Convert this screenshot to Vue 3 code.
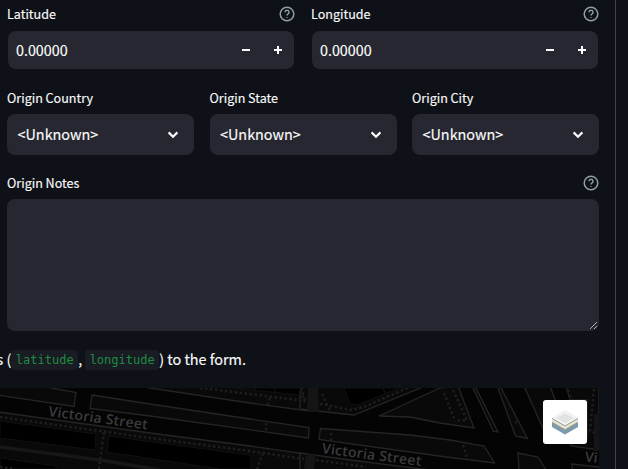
<script setup>
const coordinates = ['Latitude', 'Longitude']
const origins = ['Origin Country', 'Origin State', 'Origin City']
</script>

<template>
  <main class="page">
    <section class="panel">
      <div class="row coords">
        <div v-for="name in coordinates" :key="name" class="field">
          <div class="label">
            <span>{{ name }}</span>
            <svg class="help" viewBox="0 0 16 16"><circle cx="8" cy="8" r="6.8" /><path d="M6 6.300a2 2 0 1 1 3.100 1.600C8.300 8.400 8 8.700 8 9.500M8 11.200v.9" /></svg>
          </div>
          <div class="number">
            <span class="value">0.00000</span>
            <span class="step"><svg viewBox="0 0 8 8"><path d="M0 3h8v2H0z" /></svg></span>
            <span class="step"><svg viewBox="0 0 8 8"><path d="M3 0h2v3h3v2H5v3H3V5H0V3h3z" /></svg></span>
          </div>
        </div>
      </div>

      <div class="row origins">
        <div v-for="name in origins" :key="name" class="field">
          <div class="label"><span>{{ name }}</span></div>
          <div class="select">
            <span>&lt;Unknown&gt;</span>
            <svg viewBox="0 0 12 8"><path d="M1.600 1.400 6 5.700l4.400-4.300" /></svg>
          </div>
        </div>
      </div>

      <div class="field notes">
        <div class="label">
          <span>Origin Notes</span>
          <svg class="help" viewBox="0 0 16 16"><circle cx="8" cy="8" r="6.800" /><path d="M6 6.300a2 2 0 1 1 3.100 1.600C8.300 8.400 8 8.700 8 9.500M8 11.200v.9" /></svg>
        </div>
        <div class="area">
          <svg viewBox="0 0 9 9"><path d="M1 8 8 1M5 8l3-3" /></svg>
        </div>
      </div>

      <p class="hint"><span>s (</span><code>latitude</code><span class="comma">,</span><code>longitude</code><span class="tail">) to the form.</span></p>

      <div class="map">
        <svg class="tiles" viewBox="0 388 599 81">
          <rect y="388" width="599" height="81" fill="#040404" />
          <g class="block">
            <path d="M-2 378 76 392.500 74 406.500-2 395z" />
            <path d="M92 395 150 404 250 419 309 427.500 308.500 438 150 416 90 408.500z" />
            <path d="M90 380 150 388 250 403 309 411 309 380z" />
            <path d="M-2 412 150 433 250 446 306 454 306 475H-2z" />
            <path d="M300 409 354 415 440 380H300z" />
            <path d="M379 416 440 388 458 386 474 428 440 423 410 417z" />
            <path d="M320.500 428.500 410 435 450 440 484 446 494.500 463 450 457.500 319 439.500z" />
            <path d="M300 453 350 460 430 470V480H300z" />
            <path d="M475 386 498 432 493.500 431.500 473 388z" />
            <path d="M500 386 527.500 438.500 515.500 436 498 388z" />
            <path d="M524 386 545 433 552 440 570 440 550 386z" />
            <path d="M566 386H599V450L571 446V438H587V400H570z" />
            <path d="M518 453 538 457 546 470H519z" />
            <path d="M572 464 599 467V475H572z" />
          </g>
          <g class="building">
            <path d="M0 421 96 434 95 450 0 438z" />
            <path d="M109 436 249 455Q252 456 251 462V469H220L107 452z" />
            <path d="M0 458 56 466V469H0z" />
            <path d="M234 388 299 395 302 388z" />
            <path d="M344 388 350 404 358 405 398 388z" />
            <path d="M336 468h28v3h-28z" />
          </g>
          <g>
            <path d="M308 388h10l1 24h-12zM306 454l10 1-2 14h-10zM594 414h5v37h-5z" fill="#151515" />
            <path d="M0 447 100 460 160 470" stroke="#171717" stroke-width="3.500" fill="none" />
          </g>
          <g class="dots">
            <path d="M0 417 100 431 150 438 250 451 304 459" />
            <path d="M200 388 250 394 305 401M301 388 305 400" />
            <path d="M104 432 99 469M270 398 267 407M266 423V432M263 453 257 469" />
            <path d="M320 404 352 410 366 406 412 386M322 394l8 17M300 391l5 11" />
            <path d="M444 393 455 421M453 390 467 420 455 421" />
            <path d="M316 460 366 467M331 433v10M463 445l4 13M516 421v4M568 390l4 10" />
            <path d="M594 389 590 431 595 433M0 467 15 469" />
          </g>
          <path class="edge" d="M243 388v2M255 388v3M275 388v5M383 388l2 5" />
          <g class="street">
            <text x="48" y="416" transform="rotate(7.800 48 416)" textLength="100">Victoria Street</text>
            <text x="321.500" y="453" transform="rotate(7.500 321.500 453)" textLength="100">Victoria Street</text>
            <text x="584.500" y="461.500" transform="rotate(6 584.500 461.500)">Vi</text>
          </g>
        </svg>
        <div class="layers">
          <svg viewBox="0 0 28 28">
            <path d="M1 15 14 8 27 15v4L14 26.500 1 19z" fill="#7b9bad" />
            <path d="M1 12 14 5 27 12v2L14 21.500 1 14z" fill="#ece7d3" />
            <path d="M1 14 14 21.500 27 14" fill="none" stroke="#a79f88" stroke-width=".8" />
            <path d="M1 9.500 14 2 27 9.500v1L14 18 1 10.500z" fill="#f1f2f0" />
            <path d="M1 10.500 14 18 27 10.500" fill="none" stroke="#8b9a9d" />
            <path d="M5.500 10 14 5.500 22.500 10 14 15z" fill="#e0e3df" />
          </svg>
        </div>
      </div>
    </section>
  </main>
</template>

<style>
body { background: #0e1117; overflow: hidden; }
</style>

<style scoped>
* { box-sizing: border-box; }
.page { height: 469px; overflow: hidden; color: #fafafa; font-family: "Noto Sans CJK SC", sans-serif; }
.panel { width: 616px; height: 469px; border-right: 1px solid #41434a; overflow: hidden; }
.row { display: grid; margin-left: 7px; width: 592px; }
.coords { grid-template-columns: 1fr 1fr; gap: 16px; padding-top: 2px; }
.origins { grid-template-columns: 187px 187px 187px; justify-content: space-between; margin-top: 16px; }
.label { display: flex; justify-content: space-between; align-items: center; height: 23px; font-size: 12.550px; line-height: 23px; white-space: nowrap; -webkit-text-stroke: .15px #fafafa; }
.help { width: 16px; height: 16px; fill: none; stroke: #8f9f9f; stroke-width: 1.500; }
.number { display: flex; align-items: center; height: 38px; margin: 6px 1px 1px; padding-left: 8px; border-radius: 8px; background: #262730; font-size: 14.300px; -webkit-text-stroke: .15px #fafafa; }
.value { flex: 1; padding-bottom: 1px; }
.step { display: grid; place-items: center; width: 32px; height: 38px; }
.step svg { width: 8px; height: 8px; fill: #fafafa; }
.select { display: flex; align-items: center; justify-content: space-between; height: 41px; margin-top: 5px; padding: 0 15px 0 10.500px; border-radius: 8px; background: #262730; font-size: 14.400px; -webkit-text-stroke: .15px #fafafa; }
.select span { padding-bottom: 2px; }
.select svg { width: 12px; height: 8px; fill: none; stroke: #fafafa; stroke-width: 2.200; }
.notes { width: 592px; margin: 16px 0 0 7px; }
.area { display: flex; align-items: flex-end; justify-content: flex-end; height: 132px; margin-top: 5px; padding: 1px; border-radius: 8px; background: #262730; }
.area svg { width: 9px; height: 9px; fill: none; stroke: #a2b0b8; stroke-width: 1; }
.hint { display: flex; align-items: center; height: 24px; margin: 17px 0 0 -3.500px; font-size: 14.400px; white-space: pre; }
.hint span { padding-bottom: 3px; -webkit-text-stroke: .15px #fafafa; }
code { display: block; height: 20px; padding: 0 4.500px; border-radius: 4px; background: #1a1c24; color: #1d8d42; font: 12px/20px "DejaVu Sans Mono", monospace; }
.comma { width: 7px; }
.map { display: grid; width: 599px; height: 81px; margin-top: 16px; overflow: hidden; }
.tiles { grid-area: 1 / 1; width: 599px; height: 81px; }
.block path { fill: #090909; stroke: #252525; stroke-width: 1.300; }
.building path { fill: #000; stroke: #111; stroke-width: 1; }
.dots path { fill: none; stroke: #1e1e1e; stroke-width: 2.500; stroke-dasharray: 2.500 2.500; }
.edge { fill: none; stroke: #171717; }
.street text { fill: #3b3b3e; font: 600 14px "Open Sans", sans-serif; }
.layers { grid-area: 1 / 1; display: grid; place-items: center; width: 44px; height: 44px; margin: 12px 0 0 543px; border-radius: 3px; background: #fff; }
.layers svg { width: 28px; height: 28px; }
</style>
